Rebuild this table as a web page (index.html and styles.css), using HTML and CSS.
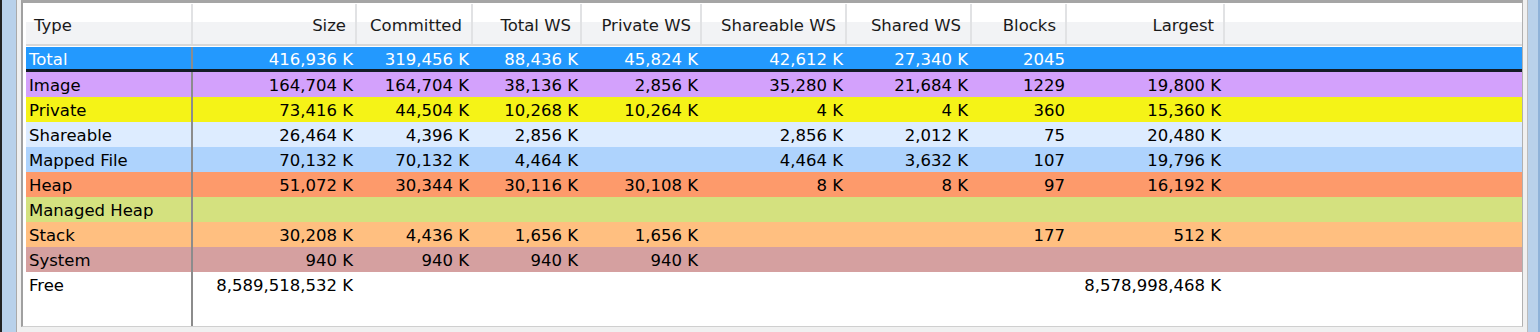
FILE: index.html
```html
<!DOCTYPE html>
<html lang="en">
  <head>
    <meta charset="UTF-8" />
    <title>Memory Summary</title>
    <link rel="stylesheet" href="styles.css">
  </head>
  <body>
    <div class="edge-dark"></div>
    <div class="frame-left"></div>

    <div class="window">
      <div class="list">
        <div class="row header">
          <div class="cell type">Type</div>
          <div class="cell">Size</div>
          <div class="cell">Committed</div>
          <div class="cell">Total WS</div>
          <div class="cell">Private WS</div>
          <div class="cell">Shareable WS</div>
          <div class="cell">Shared WS</div>
          <div class="cell">Blocks</div>
          <div class="cell">Largest</div>
          <div class="cell filler"></div>
        </div>

        <div class="rows">
          <div class="row total">
            <div class="cell type">Total</div>
            <div class="cell">416,936 K</div>
            <div class="cell">319,456 K</div>
            <div class="cell">88,436 K</div>
            <div class="cell">45,824 K</div>
            <div class="cell">42,612 K</div>
            <div class="cell">27,340 K</div>
            <div class="cell blocks">2045</div>
            <div class="cell"></div>
            <div class="cell filler"></div>
          </div>
          <div class="row image">
            <div class="cell type">Image</div>
            <div class="cell">164,704 K</div>
            <div class="cell">164,704 K</div>
            <div class="cell">38,136 K</div>
            <div class="cell">2,856 K</div>
            <div class="cell">35,280 K</div>
            <div class="cell">21,684 K</div>
            <div class="cell blocks">1229</div>
            <div class="cell">19,800 K</div>
            <div class="cell filler"></div>
          </div>
          <div class="row private">
            <div class="cell type">Private</div>
            <div class="cell">73,416 K</div>
            <div class="cell">44,504 K</div>
            <div class="cell">10,268 K</div>
            <div class="cell">10,264 K</div>
            <div class="cell">4 K</div>
            <div class="cell">4 K</div>
            <div class="cell blocks">360</div>
            <div class="cell">15,360 K</div>
            <div class="cell filler"></div>
          </div>
          <div class="row shareable">
            <div class="cell type">Shareable</div>
            <div class="cell">26,464 K</div>
            <div class="cell">4,396 K</div>
            <div class="cell">2,856 K</div>
            <div class="cell"></div>
            <div class="cell">2,856 K</div>
            <div class="cell">2,012 K</div>
            <div class="cell blocks">75</div>
            <div class="cell">20,480 K</div>
            <div class="cell filler"></div>
          </div>
          <div class="row mapped">
            <div class="cell type">Mapped File</div>
            <div class="cell">70,132 K</div>
            <div class="cell">70,132 K</div>
            <div class="cell">4,464 K</div>
            <div class="cell"></div>
            <div class="cell">4,464 K</div>
            <div class="cell">3,632 K</div>
            <div class="cell blocks">107</div>
            <div class="cell">19,796 K</div>
            <div class="cell filler"></div>
          </div>
          <div class="row heap">
            <div class="cell type">Heap</div>
            <div class="cell">51,072 K</div>
            <div class="cell">30,344 K</div>
            <div class="cell">30,116 K</div>
            <div class="cell">30,108 K</div>
            <div class="cell">8 K</div>
            <div class="cell">8 K</div>
            <div class="cell blocks">97</div>
            <div class="cell">16,192 K</div>
            <div class="cell filler"></div>
          </div>
          <div class="row managed">
            <div class="cell type">Managed Heap</div>
            <div class="cell"></div>
            <div class="cell"></div>
            <div class="cell"></div>
            <div class="cell"></div>
            <div class="cell"></div>
            <div class="cell"></div>
            <div class="cell blocks"></div>
            <div class="cell"></div>
            <div class="cell filler"></div>
          </div>
          <div class="row stack">
            <div class="cell type">Stack</div>
            <div class="cell">30,208 K</div>
            <div class="cell">4,436 K</div>
            <div class="cell">1,656 K</div>
            <div class="cell">1,656 K</div>
            <div class="cell"></div>
            <div class="cell"></div>
            <div class="cell blocks">177</div>
            <div class="cell">512 K</div>
            <div class="cell filler"></div>
          </div>
          <div class="row system">
            <div class="cell type">System</div>
            <div class="cell">940 K</div>
            <div class="cell">940 K</div>
            <div class="cell">940 K</div>
            <div class="cell">940 K</div>
            <div class="cell"></div>
            <div class="cell"></div>
            <div class="cell blocks"></div>
            <div class="cell"></div>
            <div class="cell filler"></div>
          </div>
          <div class="row free">
            <div class="cell type">Free</div>
            <div class="cell">8,589,518,532 K</div>
            <div class="cell"></div>
            <div class="cell"></div>
            <div class="cell"></div>
            <div class="cell"></div>
            <div class="cell"></div>
            <div class="cell blocks"></div>
            <div class="cell">8,578,998,468 K</div>
            <div class="cell filler"></div>
          </div>
          <!-- empty space under the last row, keeps the Type splitter going -->
          <div class="row blank">
            <div class="cell type"></div>
          </div>
        </div>
      </div>
    </div>

    <div class="frame-right"></div>
  </body>
</html>
```

FILE: styles.css
```css
html,
body {
  margin: 0;
  padding: 0;
}
body {
  display: flex;
  width: 1540px;
  height: 332px;
  overflow: hidden;
  background-color: #f0f0f0;
  font-family: 'DejaVu Sans', Verdana, sans-serif;
  font-size: 16.5px;
  color: #000;
}

/* window chrome on both sides */
.edge-dark {
  width: 2px;
  background-color: #222;
}
.frame-left {
  width: 14px;
  background-color: #b9d1ea;
}
.frame-right {
  width: 10px;
  background-color: #b9d1ea;
  border-right: 2px solid #8fb2d8;
}
.window {
  width: 1502px;
  padding: 0 4px;
  border-left: 1px solid #aaa;
  border-right: 1px solid #bcbcbc;
  background-color: #f0f0f0;
  display: flex;
  flex-direction: column;
}

/* list view */
.list {
  height: 322px;
  display: flex;
  flex-direction: column;
  background-color: #fff;
  border-top: 3px solid #a5a5a5;
  border-left: 2px solid #a0a0a0;
  border-right: 1px solid #b0b0b0;
  border-bottom: 1px solid #cfcfcf;
  padding-left: 3px;
  padding-top: 1px;
}
.row {
  display: grid;
  grid-template-columns: 167px 164px 116px 109px 120px 145px 125px 95px 158px 1fr;
  height: 25px;
  line-height: 25px;
}
.cell {
  text-align: right;
  padding-top: 1px;
  padding-right: 4px;
  white-space: nowrap;
  overflow: hidden;
}
.cell.type {
  text-align: left;
  padding-left: 3px;
  border-right: 2px solid #8c8c8c;
}
.cell.blocks {
  padding-right: 2px;
}
.cell.filler {
  padding: 0;
}

/* column header */
.row.header {
  height: 40px;
  line-height: 40px;
  border-bottom: 2px solid #d8d8d8;
  margin-bottom: 1px;
  background: linear-gradient(#fff 0, #fff 45%, #f2f3f5 45%, #f2f3f5 100%);
  color: #1a1a1a;
}
.row.header .cell {
  padding-top: 2px;
  padding-right: 9px;
  border-right: 2px solid #e1e2e4;
}
.row.header .cell.type {
  padding-left: 8px;
  border-right-color: #e1e2e4;
}
.row.header .cell.filler {
  border-right: none;
}

.rows {
  flex: 1;
  display: flex;
  flex-direction: column;
}
.row.blank {
  flex: 1;
  height: auto;
}

/* region type colours */
.total {
  background-color: #2399fe;
  color: #fff;
  height: 25px;
  box-sizing: border-box;
  border-bottom: 3px solid #141c26;
  line-height: 23px;
}
.image {
  background-color: #d3a1fc;
}
.private {
  background-color: #f5f317;
}
.shareable {
  background-color: #ddecff;
}
.mapped {
  background-color: #aed3fd;
}
.heap {
  background-color: #fd9a6b;
}
.managed {
  background-color: #d4e17f;
}
.stack {
  background-color: #ffbf80;
}
.system {
  background-color: #d5a0a0;
}
.free {
  background-color: #fff;
}
```
